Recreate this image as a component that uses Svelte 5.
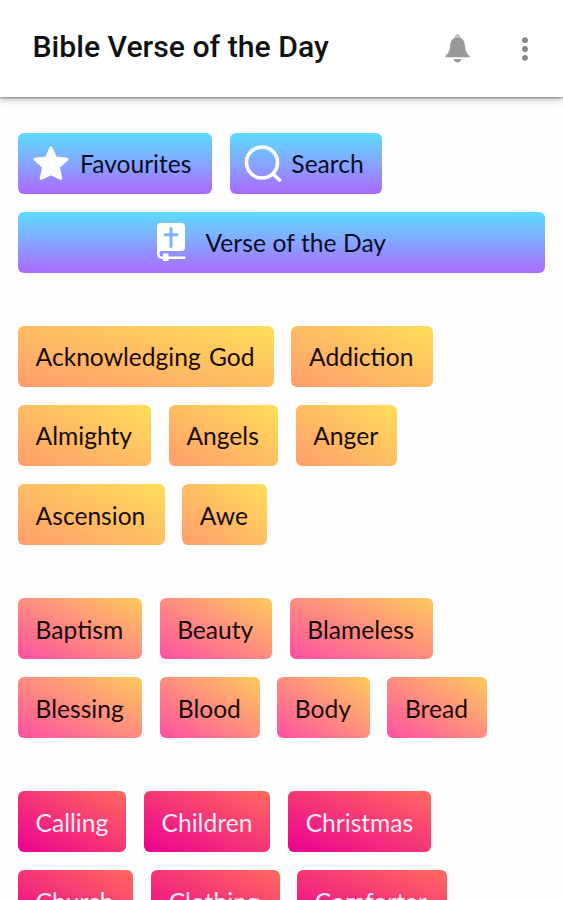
<!--
  Topic browser: a title bar, the shortcut buttons, then the verse topics
  grouped by first letter, each group with its own gradient.
-->
<script lang="ts">
	type Group = { tone: 'amber' | 'coral' | 'magenta'; rows: string[][] };

	const groups: Group[] = [
		{
			tone: 'amber',
			rows: [
				['Acknowledging God', 'Addiction'],
				['Almighty', 'Angels', 'Anger'],
				['Ascension', 'Awe']
			]
		},
		{
			tone: 'coral',
			rows: [
				['Baptism', 'Beauty', 'Blameless'],
				['Blessing', 'Blood', 'Body', 'Bread']
			]
		},
		{
			tone: 'magenta',
			rows: [
				['Calling', 'Children', 'Christmas'],
				['Church', 'Clothing', 'Comforter']
			]
		}
	];
</script>

<div class="app">
	<header>
		<h1>Bible Verse of the Day</h1>
		<button class="icon" aria-label="Notifications">
			<svg class="bell" viewBox="0 0 25 29">
				<path class="knob" d="M12.500 0c1.500 0 2.600 1.200 3 3.500l1 2.500h-8l1-2.500c.4-2.300 1.500-3.500 3-3.500z" />
				<path d="M9.500 3.800h6c2.600 1.400 3.900 3.700 4.300 7.200.5 5 1.200 8.300 4.900 11v1.200H.3V22c3.700-2.700 4.400-6 4.900-11 .4-3.500 1.700-5.800 4.300-7.200z" />
				<path d="M8.700 25h7.600c-.4 2.200-1.900 3.500-3.800 3.500S9.100 27.200 8.700 25z" />
			</svg>
		</button>
		<button class="icon" aria-label="More options">
			<svg class="dots" viewBox="0 0 6 24">
				<circle cx="3" cy="3.200" r="2.900" />
				<circle cx="3" cy="12" r="2.900" />
				<circle cx="3" cy="20.800" r="2.900" />
			</svg>
		</button>
	</header>

	<main>
		<section>
			<div class="row">
				<button class="chip sky fav">
					<svg class="star" viewBox="0 0 36 36">
						<path d="M18 3l4.300 9.400 10.700 1.100-8.100 7.200 2.300 10.800L18 27l-9.200 4.500 2.300-10.800L3 13.500l10.700-1.100z" />
					</svg>
					Favourites
				</button>
				<button class="chip sky search">
					<svg class="lens" viewBox="0 0 38 38">
						<circle cx="18" cy="17.500" r="15.500" />
						<path d="M29 29l6.500 6" />
					</svg>
					Search
				</button>
			</div>
			<button class="chip sky verse">
				<svg class="book" viewBox="0 0 30 40">
					<path class="cover" d="M4.500 1h21A3.500 3.500 0 0 1 29 4.500v21a3.500 3.500 0 0 1-3.500 3.500H6.500C4.300 29 2.700 30 2.700 32L1 33V4.500A3.500 3.500 0 0 1 4.500 1z" />
					<path class="cross" d="M15 5.300v20.500M7.800 12.800h14.400" />
					<path class="ribbon" d="M2.300 30v2c0 2.500 1.500 3.700 4 3.700h22" />
					<path class="cover" d="M7 31.500h5.500V39H7z" />
				</svg>
				Verse of the Day
			</button>
		</section>

		{#each groups as group (group.tone)}
			<section>
				{#each group.rows as row}
					<div class="row">
						{#each row as topic (topic)}
							<button class="chip {group.tone}">{topic}</button>
						{/each}
					</div>
				{/each}
			</section>
		{/each}
	</main>
</div>

<style>
	:global(body) {
		background: #fff;
	}

	.app {
		height: 900px;
		overflow: hidden;
		background: #fefefe;
	}

	header {
		box-sizing: border-box;
		height: 97px;
		padding: 0 35px 0 32.500px;
		display: flex;
		align-items: center;
		background: #fff;
		box-shadow: 0 1px 2px rgba(0, 0, 0, 0.4), 0 3px 7px rgba(0, 0, 0, 0.22);
	}

	h1 {
		flex: 1;
		margin: 0;
		padding-bottom: 4px;
		font: 500 30.200px/36px Roboto, sans-serif;
		color: #111;
	}

	button {
		border: 0;
		margin: 0;
	}

	svg {
		display: block;
		flex: none;
	}

	.icon {
		padding: 0;
		background: none;
	}

	.bell {
		width: 25px;
		height: 29px;
		margin-right: 52px;
		fill: #999;
	}

	.knob {
		fill: #c4c4c4;
	}

	.dots {
		width: 6px;
		height: 24px;
		fill: #868686;
	}

	main {
		padding: 35.500px 18px 0;
		display: flex;
		flex-direction: column;
		gap: 52.800px;
	}

	section {
		display: flex;
		flex-direction: column;
		gap: 18px;
	}

	.row {
		display: flex;
		gap: 17.700px;
	}

	.chip {
		box-sizing: border-box;
		flex: none;
		height: 61.200px;
		padding: 2px 19.200px 0 17.600px;
		display: flex;
		align-items: center;
		border-radius: 6px;
		font: 400 24.600px/30px Lato, sans-serif;
		word-spacing: 2px;
		color: #170b08;
		white-space: nowrap;
	}

	.sky {
		background: linear-gradient(#5ddcff, #86a5ff 50%, #ac68fe);
		color: #080d28;
	}

	.amber {
		background: linear-gradient(to top right, #ff9d6d, #ffde59);
	}

	.coral {
		padding-right: 18.700px;
		background: linear-gradient(to top right, #ff4fa3, #ffcb5c);
	}

	.magenta {
		padding-right: 18px;
		background: linear-gradient(to top right, #eb0090, #ff6b5e);
		color: #ffe8f4;
	}

	/* Second row of magenta sits a little wider. */
	.row:nth-child(2) .magenta {
		padding-right: 20px;
	}

	.fav {
		padding-left: 14px;
		padding-right: 20.800px;
		gap: 10px;
	}

	.search {
		padding-left: 14px;
		padding-right: 18px;
		gap: 9.500px;
	}

	.verse {
		justify-content: center;
		padding-right: 39px;
		gap: 20px;
		word-spacing: 0.300px;
	}

	.star {
		width: 38px;
		height: 38px;
		fill: #fff;
		stroke: #fff;
		stroke-width: 3;
		stroke-linejoin: round;
	}

	.lens {
		width: 38px;
		height: 38px;
		fill: none;
		stroke: #fff;
		stroke-width: 3.600;
		stroke-linecap: round;
	}

	.book {
		width: 30px;
		height: 40px;
		margin-top: -2px;
	}

	.cover {
		fill: #fff;
	}

	.cross {
		fill: none;
		stroke: #78b4ff;
		stroke-width: 3;
	}

	.ribbon {
		fill: none;
		stroke: #fff;
		stroke-width: 2.400;
		stroke-linecap: round;
	}
</style>
